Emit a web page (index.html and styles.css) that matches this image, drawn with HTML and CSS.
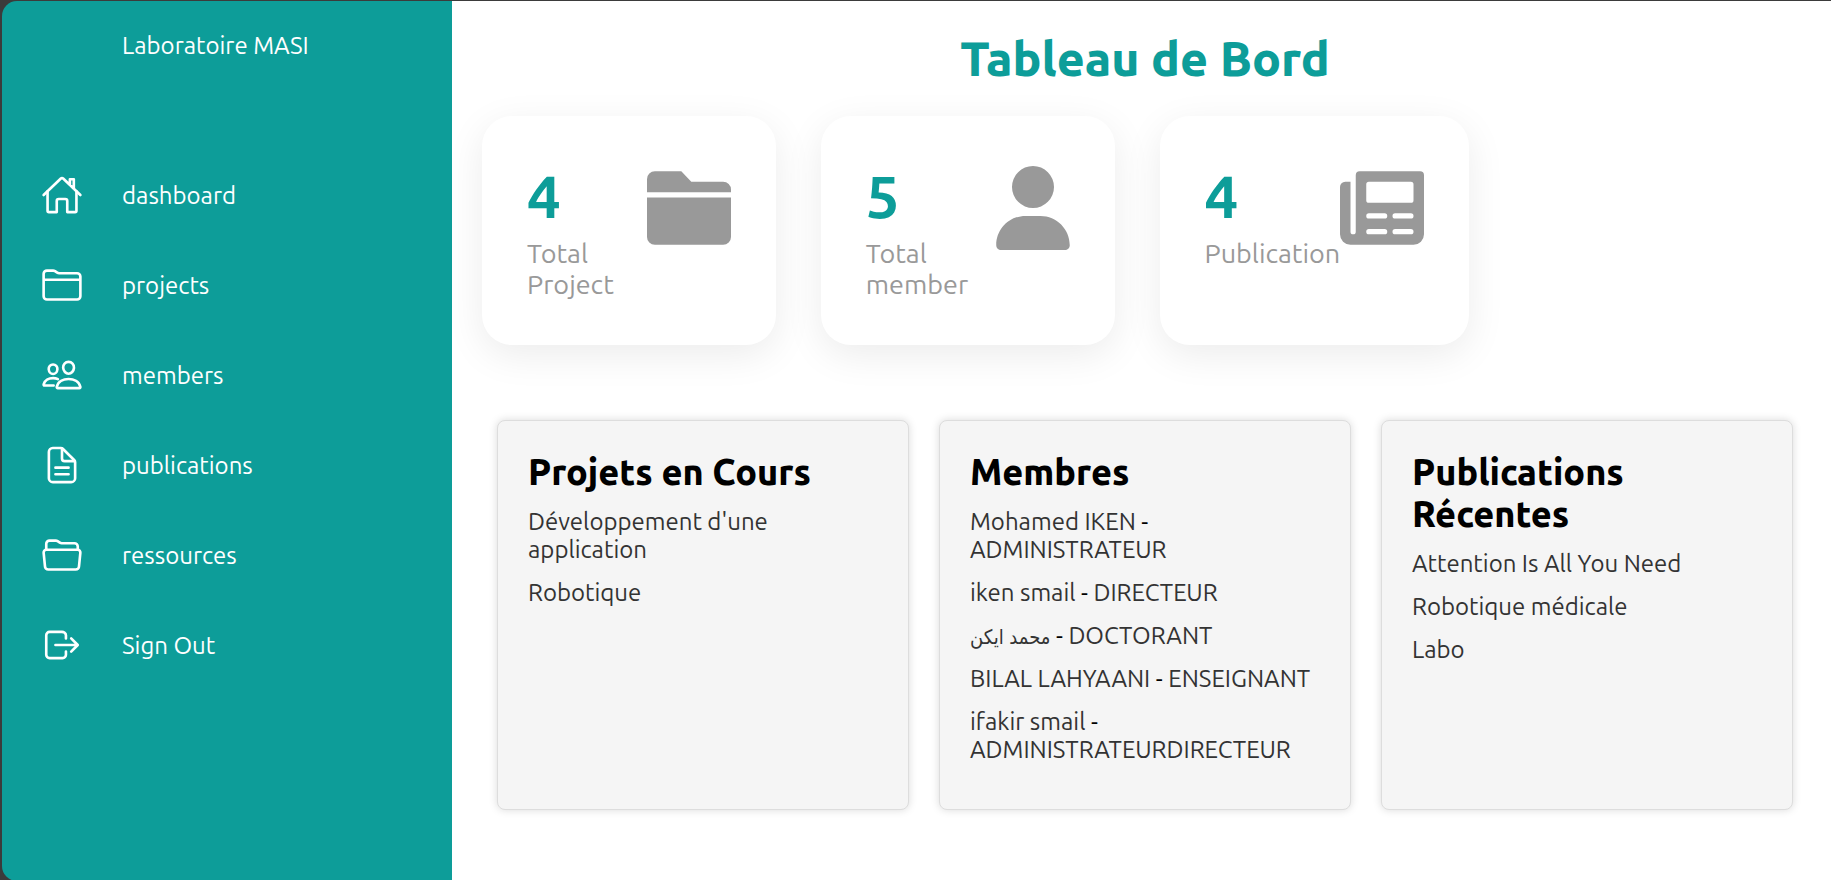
FILE: index.html
```html
<!DOCTYPE html>
<html lang="fr">
<head>
<meta charset="utf-8">
<title>Laboratoire MASI</title>
<link rel="stylesheet" href="styles.css">
</head>
<body>
<div class="layout">
  <nav class="sidebar">
    <a class="brand" href="#">Laboratoire MASI</a>
    <ul class="menu">
      <li><a class="menu-link" href="#"><svg class="menu-icon" viewBox="0 0 512 512"><path d="M80 212v236a16 16 0 0016 16h96V328a24 24 0 0124-24h80a24 24 0 0124 24v136h96a16 16 0 0016-16V212"/><path d="M480 256L266.89 52c-5-5.28-16.69-5.34-21.78 0L32 256M400 179V64h-48v69"/></svg><span>dashboard</span></a></li>
      <li><a class="menu-link" href="#"><svg class="menu-icon" viewBox="0 0 512 512"><path d="M440 432H72a40 40 0 01-40-40V120a40 40 0 0140-40h75.89a40 40 0 0122.19 6.72l27.84 18.56a40 40 0 0022.19 6.72H440a40 40 0 0140 40v240a40 40 0 01-40 40zM32 192h448"/></svg><span>projects</span></a></li>
      <li><a class="menu-link" href="#"><svg class="menu-icon" viewBox="0 0 512 512"><path d="M402 168c-2.93 40.67-33.1 72-66 72s-63.12-31.32-66-72c-3-42.31 26.37-72 66-72s69 30.46 66 72z"/><path d="M336 304c-65.17 0-127.84 32.37-143.54 95.41-2.08 8.34 3.15 16.59 11.72 16.59h263.65c8.57 0 13.77-8.25 11.72-16.59C463.85 335.36 401.18 304 336 304z"/><path d="M200 185.94c-2.34 32.48-26.72 58.06-53 58.06s-50.7-25.57-53-58.06C91.61 152.15 115.34 128 147 128s55.39 24.77 53 57.94zM206 306c-18.05-8.27-37.93-11.45-59-11.45-52 0-102.1 25.85-114.65 76.2-1.65 6.66 2.53 13.25 9.37 13.25H154"/></svg><span>members</span></a></li>
      <li><a class="menu-link" href="#"><svg class="menu-icon" viewBox="0 0 512 512"><path d="M416 221.25V416a48 48 0 01-48 48H144a48 48 0 01-48-48V96a48 48 0 0148-48h98.75a32 32 0 0122.62 9.37l141.26 141.26a32 32 0 019.37 22.62z"/><path d="M256 56v120a32 32 0 0032 32h120M176 288h160M176 368h160"/></svg><span>publications</span></a></li>
      <li><a class="menu-link" href="#"><svg class="menu-icon" viewBox="0 0 512 512"><path d="M64 192v-72a40 40 0 0140-40h75.89a40 40 0 0122.19 6.72l27.84 18.56a40 40 0 0022.19 6.72H408a40 40 0 0140 40v40"/><path d="M479.9 226.55L463.68 392a40 40 0 01-39.93 40H88.25a40 40 0 01-39.93-40L32.1 226.55A32 32 0 0164 192h384.1a32 32 0 0131.8 34.55z"/></svg><span>ressources</span></a></li>
      <li><a class="menu-link" href="#"><svg class="menu-icon" viewBox="0 0 512 512"><path d="M304 336v40a40 40 0 01-40 40H104a40 40 0 01-40-40V136a40 40 0 0140-40h152c22.09 0 48 17.91 48 40v40M368 336l80-80-80-80M176 256h256"/></svg><span>Sign Out</span></a></li>
    </ul>
  </nav>

  <main class="main">
    <h1 class="title">Tableau de Bord</h1>

    <section class="cards">
      <article class="card">
        <div>
          <div class="number">4</div>
          <div class="label">Total Project</div>
        </div>
        <svg class="card-icon" viewBox="0 0 512 512"><path d="M48 32H209L270 96H464A48 48 0 0 1 512 144V160H0V80A48 48 0 0 1 48 32zM0 192H512V432A48 48 0 0 1 464 480H48A48 48 0 0 1 0 432z"/></svg>
      </article>
      <article class="card">
        <div>
          <div class="number">5</div>
          <div class="label">Total member</div>
        </div>
        <svg class="card-icon card-icon-narrow" viewBox="0 0 448 512"><path d="M224 256A128 128 0 1 0 224 0a128 128 0 1 0 0 256zm-45.700 48C79.800 304 0 383.800 0 482.300C0 498.700 13.300 512 29.700 512H418.300c16.400 0 29.700-13.300 29.700-29.700C448 383.800 368.200 304 269.700 304H178.300z"/></svg>
      </article>
      <article class="card">
        <div>
          <div class="number">4</div>
          <div class="label">Publication</div>
        </div>
        <svg class="card-icon" viewBox="0 0 512 512"><path fill-rule="evenodd" d="M120 32H488A24 24 0 0 1 512 56V416A64 64 0 0 1 448 480H64A64 64 0 0 1 0 416V128A32 32 0 0 1 32 96H64V400A16 16 0 0 0 96 400V56A24 24 0 0 1 120 32zM176 96A16 16 0 0 0 160 112V208A16 16 0 0 0 176 224H432A16 16 0 0 0 448 208V112A16 16 0 0 0 432 96zM176 288A16 16 0 0 0 176 320H272A16 16 0 0 0 272 288zM336 288A16 16 0 0 0 336 320H432A16 16 0 0 0 432 288zM176 384A16 16 0 0 0 176 416H272A16 16 0 0 0 272 384zM336 384A16 16 0 0 0 336 416H432A16 16 0 0 0 432 384z"/></svg>
      </article>
    </section>

    <section class="panels">
      <article class="panel">
        <h2 class="panel-title">Projets en Cours</h2>
        <ul class="list">
          <li><a href="#">Développement d'une application</a></li>
          <li><a href="#">Robotique</a></li>
        </ul>
      </article>
      <article class="panel">
        <h2 class="panel-title">Membres</h2>
        <ul class="list">
          <li><a href="#">Mohamed IKEN</a> - <a href="#">ADMINISTRATEUR</a></li>
          <li><a href="#">iken smail</a> - <a href="#">DIRECTEUR</a></li>
          <li><a href="#" lang="ar">محمد ايكن</a> - <a href="#">DOCTORANT</a></li>
          <li><a href="#">BILAL LAHYAANI</a> - <a href="#">ENSEIGNANT</a></li>
          <li><a href="#">ifakir smail</a> - <a href="#">ADMINISTRATEURDIRECTEUR</a></li>
        </ul>
      </article>
      <article class="panel">
        <h2 class="panel-title">Publications Récentes</h2>
        <ul class="list">
          <li><a href="#">Attention Is All You Need</a></li>
          <li><a href="#">Robotique médicale</a></li>
          <li><a href="#">Labo</a></li>
        </ul>
      </article>
    </section>
  </main>
</div>
</body>
</html>
```
FILE: styles.css
```css
* {
  margin: 0;
  padding: 0;
  box-sizing: border-box;
}

:root {
  --teal: #0d9d99;
  --grey: #999;
}

body {
  height: 100vh;
  overflow: hidden;
  background: #3b3b3b;
  font-family: Ubuntu, "Noto Sans", "DejaVu Sans", sans-serif;
  font-size: 24px;
  font-weight: 450;
}

a {
  color: inherit;
  text-decoration: none;
}

ul {
  list-style: none;
}

.layout {
  display: flex;
  min-height: 100vh;
  margin: 1px 0 0 2px;
}

.sidebar {
  flex: 0 0 450px;
  padding-left: 15px;
  border-radius: 15px 0 0 15px;
  background: var(--teal);
  color: #fff;
}

.brand {
  display: block;
  margin-bottom: 59px;
  padding-left: 105px;
  line-height: 90px;
}

.menu-link {
  display: flex;
  align-items: center;
  height: 90px;
}

.menu-icon {
  width: 42px;
  height: 42px;
  margin: 0 39px 0 24px;
  fill: none;
  stroke: currentColor;
  stroke-width: 32px;
  stroke-linecap: round;
  stroke-linejoin: round;
}

.main {
  flex: 1;
  padding: 30px 23px 0 30px;
  background: #fff;
}

.title {
  margin-bottom: 30px;
  color: var(--teal);
  font-size: 48px;
  font-weight: 800;
  line-height: 55px;
  text-align: center;
}

.cards {
  display: grid;
  grid-template-columns: repeat(4, 1fr);
  gap: 45px;
}

.card {
  display: flex;
  justify-content: space-between;
  padding: 45px;
  border-radius: 30px;
  background: #fff;
  box-shadow: 0 10px 38px rgba(0, 0, 0, 0.08);
}

.number {
  margin-bottom: 8px;
  color: var(--teal);
  font-size: 60px;
  font-weight: 600;
  line-height: 69px;
}

.label {
  color: var(--grey);
  font-size: 27px;
  font-weight: 400;
  line-height: 31px;
}

.card-icon {
  flex: none;
  width: 84px;
  height: 84px;
  margin-top: 5px;
  fill: var(--grey);
}

.card-icon-narrow {
  width: 74px;
}

.panels {
  display: grid;
  grid-template-columns: repeat(3, 1fr);
  gap: 30px;
  margin-top: 75px;
  padding: 0 15px;
}

.panel {
  padding: 30px;
  border: 1px solid #ddd;
  border-radius: 8px;
  background: #f5f5f5;
  box-shadow: 0 0 8px rgba(0, 0, 0, 0.15);
}

.panel-title {
  margin-bottom: 15px;
  color: #000;
  font-size: 36px;
  font-weight: 800;
  line-height: 42px;
}

.list li {
  margin-bottom: 15px;
  color: #000;
  line-height: 28px;
}

.list a {
  color: #333;
}

.list a:lang(ar) {
  font-family: "DejaVu Sans Condensed", "DejaVu Sans", sans-serif;
  font-size: 20px;
  line-height: 20px;
}
```
